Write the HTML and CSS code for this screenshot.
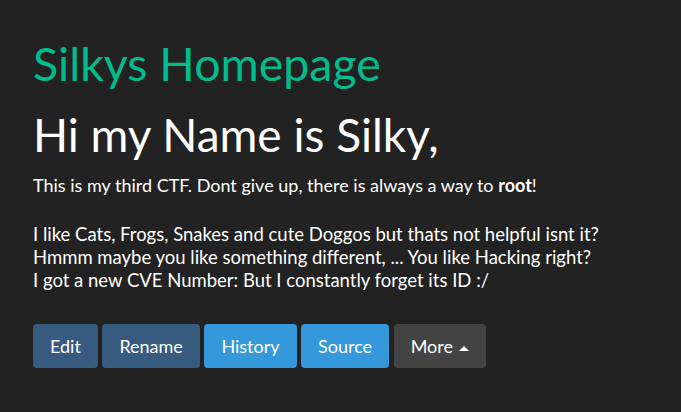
FILE: index.html
```html
<!DOCTYPE html>
<html lang="en">

<head>
    <meta charset="UTF-8">
    <meta name="viewport" content="width=device-width, initial-scale=1.0">
    <title>Silkys Homepage</title>
    <link rel="stylesheet" href="styles.css">
</head>

<body>
    <div class="container">
        <h2 class="site-title">Silkys Homepage</h2>
        <div class="page-body">
            <h1>Hi my Name is Silky,</h1>
            <p class="lead">This is my third CTF. Dont give up, there is always a way to <strong>root</strong>!</p>
            <p>I like Cats, Frogs, Snakes and cute Doggos but thats not helpful isnt it?<br>
                Hmmm maybe you like something different, ... You like Hacking right?<br>
                I got a new CVE Number: But I constantly forget its ID :/</p>
        </div>
        <div class="actions">
            <a class="btn btn-primary" href="#">Edit</a>
            <a class="btn btn-primary" href="#">Rename</a>
            <a class="btn btn-info" href="#">History</a>
            <a class="btn btn-info" href="#">Source</a>
            <a class="btn btn-default" href="#">More <span class="caret"></span></a>
        </div>
    </div>
</body>

</html>
```

FILE: styles.css
```css
body {
    margin: 0;
    font-family: Lato, "Noto Sans", sans-serif;
    font-size: 18.5px;
    line-height: 23px;
    background-color: #222;
    color: #fff;
}

.container {
    padding: 36px 33px;
}

.site-title {
    margin: 0 0 15px;
    font-size: 46.5px;
    font-weight: 400;
    line-height: 1.2;
    color: #00bc8c;
}

h1 {
    margin: 0 0 12px;
    font-size: 46px;
    font-weight: 400;
    line-height: 1.2;
}

p {
    margin: 0 0 32px;
}

.lead {
    margin-bottom: 26px;
    font-size: 18px;
}

.actions {
    display: flex;
    gap: 4.5px;
}

.btn {
    display: inline-block;
    padding: 10px 17px;
    font-size: 18px;
    line-height: 24px;
    color: #fff;
    text-decoration: none;
    border-radius: 4px;
}

.btn-primary {
    background-color: #375a7f;
}

.btn-info {
    background-color: #3498db;
}

.btn-default {
    background-color: #444;
}

.caret {
    display: inline-block;
    width: 0;
    height: 0;
    margin-left: 1px;
    vertical-align: middle;
    border-bottom: 5px solid #fff;
    border-left: 5px solid transparent;
    border-right: 5px solid transparent;
}
```
